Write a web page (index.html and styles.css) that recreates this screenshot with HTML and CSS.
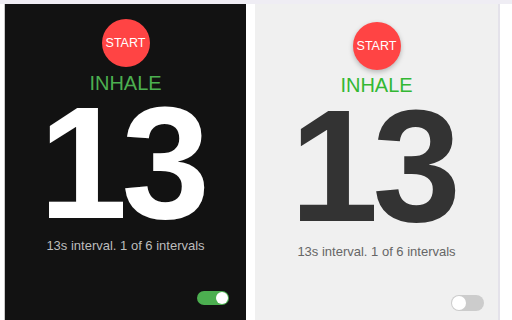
FILE: index.html
```html
<!DOCTYPE html>
<html>
<head>
<meta charset="utf-8">
<link rel="stylesheet" href="styles.css">
</head>
<body>
<div class="topbar"></div>
<div class="row">
  <div class="panel dark">
    <div class="start">START</div>
    <div class="phase">INHALE</div>
    <div class="count">13</div>
    <div class="caption">13s interval. 1 of 6 intervals</div>
    <div class="toggle on"><span class="knob"></span></div>
  </div>
  <div class="panel light">
    <div class="start">START</div>
    <div class="phase">INHALE</div>
    <div class="count">13</div>
    <div class="caption">13s interval. 1 of 6 intervals</div>
    <div class="toggle off"><span class="knob"></span></div>
  </div>
</div>
</body>
</html>
```
FILE: styles.css
```css
html, body {
  margin: 0;
  padding: 0;
  background: #ffffff;
  width: 512px;
  height: 320px;
  overflow: hidden;
  font-family: "Liberation Sans", Arial, sans-serif;
}
.topbar {
  height: 4px;
  background: #efedf4;
}
.row {
  display: flex;
  height: 316px;
}
.panel {
  display: flex;
  flex-direction: column;
  align-items: center;
  box-sizing: border-box;
}
.dark {
  margin-left: 4px;
  width: 242px;
  border-left: 1px solid #c8c8c8;
  background: #121212;
  padding-top: 15px;
}
.light {
  margin-left: 9px;
  width: 245px;
  background: #f0f0f0;
  border-right: 2px solid #e4e2ea;
  padding-top: 18px;
}
.start {
  width: 48px;
  height: 48px;
  border-radius: 50%;
  background: #ff4444;
  color: #ffffff;
  font-size: 12.5px;
  display: flex;
  align-items: center;
  justify-content: center;
}
.light .start {
  box-shadow: 0 2px 5px rgba(0,0,0,0.25);
}
.phase {
  font-size: 20px;
  line-height: 23px;
  margin-top: 5px;
}
.dark .phase { color: #4caf50; }
.light .phase { color: #33b833; margin-top: 4px; }
.count {
  font-size: 159px;
  font-weight: bold;
  line-height: 140px;
  height: 140px;
  margin-top: -2px;
  letter-spacing: -6px;
  padding-right: 8px;
}
.dark .count { color: #ffffff; }
.light .count { color: #333333; margin-top: -1px; }
.caption {
  font-size: 13px;
  line-height: 15px;
  margin-top: 5px;
}
.dark .caption { color: #bdbdbd; }
.light .caption { color: #666666; margin-top: 8px; }
.toggle {
  align-self: flex-end;
  width: 32px;
  height: 14px;
  border-radius: 8px;
  display: flex;
  align-items: center;
  padding: 0 1px;
  box-sizing: border-box;
}
.toggle .knob {
  width: 12px;
  height: 12px;
  border-radius: 50%;
  background: #ffffff;
}
.on {
  background: #4caf50;
  justify-content: flex-end;
  margin-top: 38px;
  margin-right: 17px;
}
.off {
  background: #cccccc;
  justify-content: flex-start;
  width: 33px;
  height: 16px;
  margin-top: 36px;
  margin-right: 14px;
}
.off .knob {
  width: 14px;
  height: 14px;
}
```
